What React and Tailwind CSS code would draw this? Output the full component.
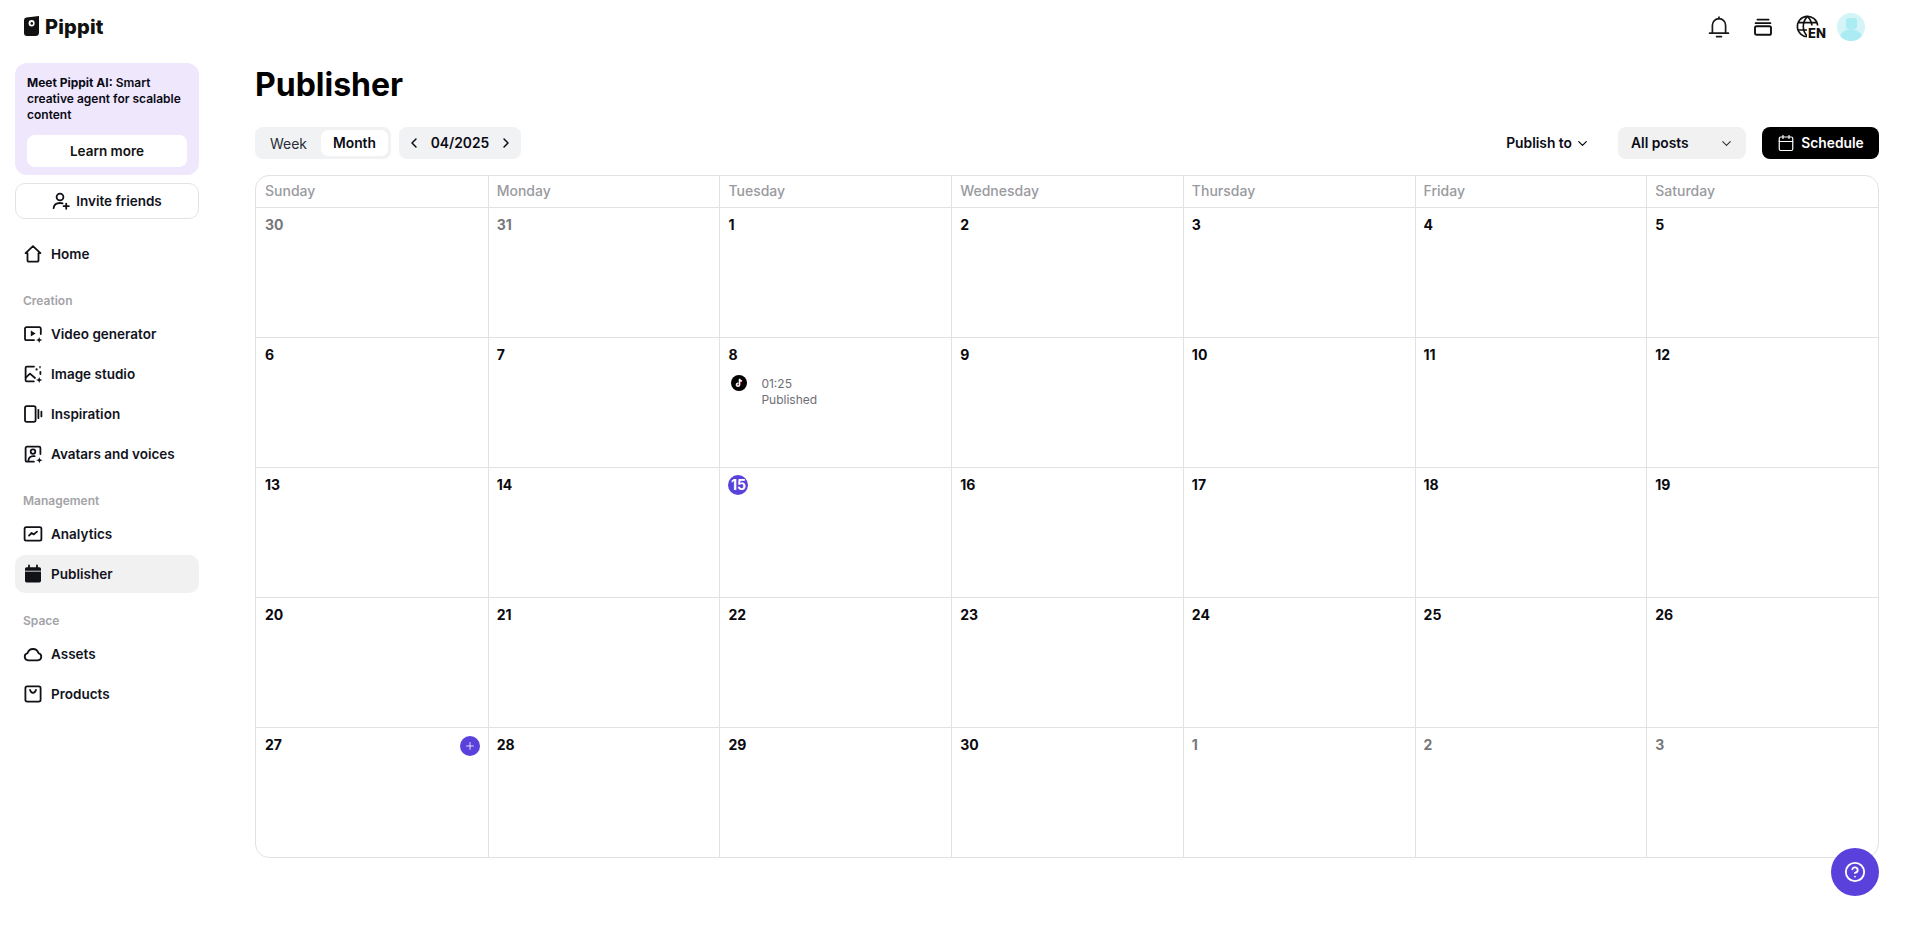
import React from "react";
import { ChevronLeft, ChevronRight, ChevronDown, Plus, CircleHelp, Calendar } from "lucide-react";

const S = { fill: "none", stroke: "#111118", strokeWidth: 1.8, strokeLinecap: "round", strokeLinejoin: "round" };

function Spark({ x, y }) {
  return <path d={`M${x} ${y - 3.2}c.35 2 .9 2.7 3.2 3.2c-2.3.5-2.85 1.2-3.2 3.2c-.35-2-.9-2.7-3.2-3.2c2.3-.5 2.85-1.2 3.2-3.2z`} fill="#111118" />;
}

const icons = {
  home: <path {...S} d="M3.6 10.2 11 3.2l7.4 7h-1.9v7.2a1.2 1.2 0 0 1-1.2 1.2H6.7a1.2 1.2 0 0 1-1.2-1.2v-7.2z" />,
  video: <><path {...S} d="M18.8 11V5.6a1.4 1.4 0 0 0-1.4-1.4H4.4A1.4 1.4 0 0 0 3 5.6v10.2a1.4 1.4 0 0 0 1.4 1.4H12" /><path d="M8.8 7.6v6l4.8-3z" fill="#111118" /><Spark x={17.2} y={17} /></>,
  image: <><path {...S} d="M12 3.6H4.8a1.2 1.2 0 0 0-1.2 1.2v12.4a1.2 1.2 0 0 0 1.2 1.2h7M18.4 11V9" /><path {...S} d="M3.8 14.6 8 10.6l5 4.4" /><circle cx="14.6" cy="6.4" r="1.1" fill="#111118" /><path d="M17.4 3h1.2v2.2h-1.2z" fill="#111118" /><Spark x={17.2} y={17} /></>,
  inspiration: <><rect {...S} x="3" y="3.2" width="10.6" height="15.6" rx="1.8" /><path {...S} d="M16.4 6.8v8.4M19.4 8.6v4.8" /></>,
  avatar: <><path {...S} d="M18.4 11V5a1.3 1.3 0 0 0-1.3-1.3H4.9A1.3 1.3 0 0 0 3.6 5v12.4a1.3 1.3 0 0 0 1.3 1.3h7" /><circle {...S} cx="11" cy="8.6" r="2.3" /><path {...S} d="M6.4 18c0-3 2-4.8 4.6-4.8h1.6" /><Spark x={17.4} y={17.2} /></>,
  analytics: <><rect {...S} x="2.6" y="4.2" width="16.8" height="13.4" rx="1.6" /><path {...S} d="m7 12.6 2.6-2.6 2.2 1.4 3.2-2.8" /></>,
  publisher: <><path d="M4.6 4.2h12.8A1.6 1.6 0 0 1 19 5.8v12a1.6 1.6 0 0 1-1.6 1.6H4.6A1.6 1.6 0 0 1 3 17.8v-12a1.6 1.6 0 0 1 1.6-1.6z" fill="#111118" /><path d="M7 2.4v3.4M15 2.4v3.4" stroke="#111118" strokeWidth="1.8" strokeLinecap="round" /><path d="M3 8.2h16" stroke="#fff" strokeWidth="0.8" /></>,
  assets: <path {...S} d="M6.2 17.4a3.7 3.7 0 0 1-.6-7.3 5.6 5.6 0 0 1 10.8 0 3.7 3.7 0 0 1-.6 7.3z" />,
  products: <><rect {...S} x="3.4" y="3.4" width="15.2" height="15.2" rx="1.8" /><path {...S} d="M8 6.8c.5 2 1.5 3 3 3s2.5-1 3-3" /></>,
};

function NavIcon({ name }) {
  return <svg width="22" height="22" viewBox="0 0 22 22" className="shrink-0">{icons[name]}</svg>;
}

function NavItem({ icon, label, active }) {
  return (
    <div className={`flex h-[38px] items-center gap-[7px] rounded-[10px] pl-[7px] text-[13.5px] font-semibold text-[#11131c] ${active ? "bg-[#f1f1f1]" : ""}`}>
      <NavIcon name={icon} />
      <span>{label}</span>
    </div>
  );
}

function Section({ title, children }) {
  return (
    <div className="mt-[14px]">
      <div className="flex h-[28px] items-center pl-[8px] text-[12px] font-semibold leading-none text-[#a3a3a8]">{title}</div>
      <div className="flex flex-col gap-[2px]">{children}</div>
    </div>
  );
}

function Logo() {
  return (
    <div className="flex items-center gap-[5px]">
      <svg width="16" height="21" viewBox="0 0 16 21">
        <path d="M2.4 1.6 15 0v16.5a3.5 3.5 0 0 1-3.5 3.5H3a3 3 0 0 1-3-3V4.2a2.6 2.6 0 0 1 2.4-2.6z" fill="#111" />
        <ellipse cx="7.6" cy="7.2" rx="3" ry="3.2" fill="#fff" />
        <circle cx="7.8" cy="7.4" r="1.3" fill="#111" />
      </svg>
      <span className="text-[20px] font-extrabold leading-none tracking-[0.2px] text-[#111]">Pippit</span>
    </div>
  );
}

function Sidebar() {
  return (
    <aside className="w-[214px] shrink-0 pl-[15px] pr-[15px]">
      <div className="flex h-[63px] items-start pt-[16px] pl-[9px]"><Logo /></div>
      <div className="h-[112px] rounded-[12px] bg-[#efe8fd] px-[12px] pt-[12px]">
        <p className="text-[12px] font-semibold leading-[16px] text-[#0a0a14]"><span className="font-bold">Meet Pippit AI:</span> Smart creative agent for scalable content</p>
        <div className="mt-[12px] flex h-[32px] items-center justify-center rounded-[8px] bg-white text-[13.5px] font-semibold text-[#111]">Learn more</div>
      </div>
      <div className="mt-[8px] flex h-[36px] items-center justify-center gap-[6px] rounded-[10px] border border-[#e3e3e3] text-[13.5px] font-semibold text-[#11131c]">
        <svg width="18" height="18" viewBox="0 0 18 18"><circle {...S} cx="8" cy="5" r="3.4" /><path {...S} d="M1.6 16.2c.3-3.6 2.6-5.2 6.4-5.2 1 0 1.9.1 2.6.4" /><path {...S} d="M11.6 14.2h5.2M14.2 11.6v5.2" /></svg>
        <span>Invite friends</span>
      </div>
      <div className="mt-[16px]"><NavItem icon="home" label="Home" /></div>
      <Section title="Creation">
        <NavItem icon="video" label="Video generator" />
        <NavItem icon="image" label="Image studio" />
        <NavItem icon="inspiration" label="Inspiration" />
        <NavItem icon="avatar" label="Avatars and voices" />
      </Section>
      <Section title="Management">
        <NavItem icon="analytics" label="Analytics" />
        <NavItem icon="publisher" label="Publisher" active />
      </Section>
      <Section title="Space">
        <NavItem icon="assets" label="Assets" />
        <NavItem icon="products" label="Products" />
      </Section>
    </aside>
  );
}

function TopIcons() {
  return (
    <div className="flex h-[54px] items-center justify-end pr-[53px]">
      <svg width="22" height="22" viewBox="0 0 22 22" fill="none" stroke="#1a1a1a" strokeWidth="1.7" strokeLinecap="round" className="mr-[24px]">
        <path d="M1.6 17.2h18.8" />
        <path d="M4.4 17.2V9.2a6.6 6.6 0 0 1 13.2 0v8" />
        <path d="M11 1.2v1.2M8.6 20.6h4.8" />
      </svg>
      <svg width="18" height="18" viewBox="0 0 18 18" className="mr-[24px]">
        <path d="M3.4 1.6h11.2M1.6 5.2h14.8" stroke="#111" strokeWidth="1.8" fill="none" strokeLinecap="round" />
        <rect x="1" y="8.2" width="16" height="8.6" rx="1.6" fill="none" stroke="#111" strokeWidth="1.9" />
      </svg>
      <div className="relative mr-[13px] h-[24px] w-[28px]">
        <svg width="23" height="23" viewBox="0 0 24 24" className="absolute left-0 top-0" fill="none" stroke="#111" strokeWidth="1.7">
          <path d="M13 22.6A10.6 10.6 0 1 1 22.6 11M1.6 8h20.6M1.6 15.6h10" />
          <path d="M12 1.4c-3 3-4.4 6.4-4.4 10.6s1.4 7.6 4.8 10.6M12 1.4c3 3 4.4 6 4.6 9.6" />
        </svg>
        <span className="absolute left-[11px] top-[12px] bg-white pl-[1px] text-[13px] font-extrabold leading-[13px] text-[#111]">EN</span>
      </div>
      <svg width="28" height="28" viewBox="0 0 28 28">
        <defs><clipPath id="av"><circle cx="14" cy="14" r="14" /></clipPath></defs>
        <circle cx="14" cy="14" r="14" fill="#d4f4f7" />
        <g clipPath="url(#av)">
          <rect x="9" y="5" width="11" height="11" rx="3" fill="#abecf3" />
          <ellipse cx="14" cy="25" rx="11" ry="9" fill="#abecf3" />
        </g>
      </svg>
    </div>
  );
}

function Toolbar() {
  return (
    <div className="flex h-[32px] items-center justify-between">
      <div className="flex items-center gap-[8px]">
        <div className="flex h-[32px] w-[136px] items-center rounded-[8px] bg-[#f1f2f4] p-[3px] text-[14px] text-[#2a2d36]">
          <div className="flex w-[63px] items-center justify-center pr-[2px] font-normal">Week</div>
          <div className="flex h-[26px] w-[67px] items-center justify-center rounded-[7px] bg-white text-[13.8px] font-semibold text-[#0a0a14]">Month</div>
        </div>
        <div className="flex h-[32px] w-[122px] items-center justify-center gap-[9px] rounded-[8px] bg-[#f1f2f4] text-[13.8px] font-semibold text-[#0a0a14]">
          <ChevronLeft size={16} strokeWidth={2.2} />
          <span>04/2025</span>
          <ChevronRight size={16} strokeWidth={2.2} />
        </div>
      </div>
      <div className="flex items-center">
        <div className="mr-[28px] flex items-center gap-[3px] text-[13.8px] font-semibold text-[#0a0a14]">
          <span>Publish to</span><ChevronDown size={15} strokeWidth={2} />
        </div>
        <div className="flex h-[32px] w-[128px] items-center justify-between rounded-[8px] bg-[#f1f1f1] pl-[13px] pr-[12px] text-[13.8px] font-semibold text-[#0a0a14]">
          <span>All posts</span><ChevronDown size={15} strokeWidth={1.8} className="text-[#333]" />
        </div>
        <div className="ml-[16px] flex h-[32px] w-[117px] items-center justify-center gap-[6px] rounded-[8px] bg-black text-[13.8px] font-semibold text-white">
          <Calendar size={18} strokeWidth={1.6} />
          <span>Schedule</span>
        </div>
      </div>
    </div>
  );
}

const weekdays = ["Sunday", "Monday", "Tuesday", "Wednesday", "Thursday", "Friday", "Saturday"];
const days = [
  [30, true], [31, true], [1], [2], [3], [4], [5],
  [6], [7], [8], [9], [10], [11], [12],
  [13], [14], [15], [16], [17], [18], [19],
  [20], [21], [22], [23], [24], [25], [26],
  [27], [28], [29], [30], [1, true], [2, true], [3, true],
];

const tiktok = "M8.6 3.8v5.9a1.5 1.5 0 1 1-1.2-1.5M8.6 3.8c.2 1.3 1 2.1 2.4 2.2";

function TikTok() {
  return (
    <svg width="16" height="16" viewBox="0 0 16 16" className="shrink-0">
      <circle cx="8" cy="8" r="8" fill="#000" />
      <path d={tiktok} fill="none" stroke="#25f4ee" strokeWidth="1.2" transform="translate(-.4 .3)" />
      <path d={tiktok} fill="none" stroke="#fe2c55" strokeWidth="1.2" transform="translate(.4 .1)" />
      <path d={tiktok} fill="none" stroke="#fff" strokeWidth="1.1" />
    </svg>
  );
}

function Cell({ day, muted, index }) {
  const isToday = index === 16;
  return (
    <div className={`relative h-[130px] border-t border-[#e2e2e4] pt-[8px] ${index % 7 ? "border-l pl-[8px]" : "pl-[9px]"}`}>
      {isToday ? (
        <div className="-mt-[1px] flex h-[20px] w-[20px] items-center justify-center rounded-full bg-[#5b41dc] text-[14px] font-bold leading-none text-white">{day}</div>
      ) : (
        <div className={`text-[14px] font-bold leading-[18px] ${muted ? "text-[#77777b]" : "text-[#0a0a0f]"}`}>{day}</div>
      )}
      {index === 9 && (
        <div className="mt-[11px] flex items-start gap-[14px] pl-[3px] text-[12px] leading-[16px] text-[#6e6e76]">
          <TikTok />
          <div className="pt-[1px]"><div>01:25</div><div>Published</div></div>
        </div>
      )}
      {index === 28 && (
        <div className="absolute right-[8px] top-[8px] flex h-[20px] w-[20px] items-center justify-center rounded-full bg-[#5b41dc] text-white">
          <Plus size={12} strokeWidth={1.6} />
        </div>
      )}
    </div>
  );
}

function CalendarGrid() {
  return (
    <div className="mt-[16px] overflow-hidden rounded-[14px] border border-[#e2e2e4]">
      <div className="grid h-[31px] grid-cols-7">
        {weekdays.map((d, i) => (
          <div key={d} className={`flex items-center pb-[2px] text-[14px] font-medium text-[#9a9aa0] ${i ? "border-l border-[#e2e2e4] pl-[8px]" : "pl-[9px]"}`}>{d}</div>
        ))}
      </div>
      <div className="grid grid-cols-7">
        {days.map(([d, m], i) => <Cell key={i} day={d} muted={m} index={i} />)}
      </div>
    </div>
  );
}

export default function App() {
  return (
    <div className="relative flex h-[926px] w-full overflow-hidden bg-white" style={{ fontFamily: "Inter, 'Noto Sans', sans-serif" }}>
      <Sidebar />
      <main className="min-w-0 flex-1">
        <TopIcons />
        <div className="pl-[41px] pr-[39px]">
          <h1 className="flex h-[73px] items-start pt-[12px] text-[32px] font-bold leading-[38px] text-black">Publisher</h1>
          <Toolbar />
          <CalendarGrid />
        </div>
      </main>
      <div className="absolute left-[1831px] top-[848px] flex h-[48px] w-[48px] items-center justify-center rounded-full bg-[#5b41dc] text-white">
        <CircleHelp size={22} strokeWidth={2} />
      </div>
    </div>
  );
}
